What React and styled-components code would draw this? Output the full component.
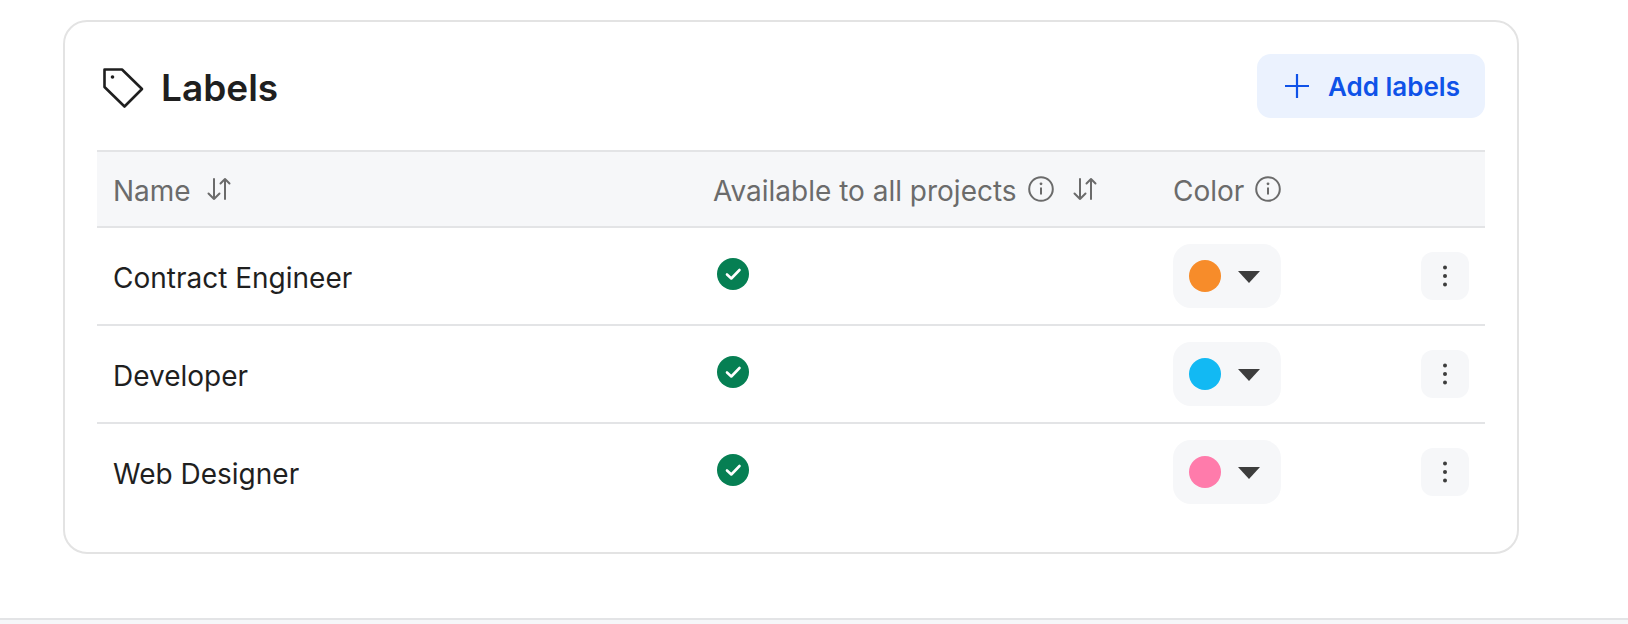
import React from 'react';
import styled, { createGlobalStyle } from 'styled-components';

const GlobalStyle = createGlobalStyle`
    html, body {
        margin: 0;
        padding: 0;
        background: #fff;
    }
    body {
        font-family: "Inter", "Liberation Sans", sans-serif;
        color: #1f1f1f;
    }
`;

const labels = [
    { name: 'Contract Engineer', color: '#f78c2a' },
    { name: 'Developer', color: '#12b9f3' },
    { name: 'Web Designer', color: '#ff7bab' },
];

function TagIcon() {
    return (
        <TagSvg width="42" height="42" viewBox="0 0 42 42" fill="none" stroke="#1f1f1f" strokeWidth="2.6" strokeLinejoin="round">
            <path d="M2.5 2.500h17.500l20 19.500-17.500 17.500L2.500 20z" />
            <circle cx="10.500" cy="10" r="1.800" fill="#1f1f1f" stroke="none" />
        </TagSvg>
    );
}

function SortIcon() {
    return (
        <svg width="24" height="24" viewBox="0 0 24 24" fill="none" stroke="#6b6b6b" strokeWidth="2" strokeLinecap="round" strokeLinejoin="round">
            <path d="M7 2v20M1.500 16.500 7 22l5.500-5.500" />
            <path d="M18 22V2M13.500 6.500 18 2l4.500 4.500" />
        </svg>
    );
}

function InfoIcon() {
    return (
        <svg width="26" height="26" viewBox="0 0 26 26" fill="none" stroke="#6b6b6b" strokeWidth="2">
            <circle cx="13" cy="13" r="11.800" />
            <path d="M13 11.500v7" />
            <circle cx="13" cy="7.800" r="1.400" fill="#6b6b6b" stroke="none" />
        </svg>
    );
}

function PlusIcon() {
    return (
        <svg width="24" height="24" viewBox="0 0 24 24" fill="none" stroke="#0f52e8" strokeWidth="2.200">
            <path d="M12 0v24M0 12h24" />
        </svg>
    );
}

function CheckIcon() {
    return (
        <svg width="32" height="32" viewBox="0 0 32 32">
            <circle cx="16" cy="16" r="16" fill="#067f53" />
            <path d="M10 16.500l4.300 4L22.500 12" fill="none" stroke="#fff" strokeWidth="2.600" strokeLinecap="round" strokeLinejoin="round" />
        </svg>
    );
}

function KebabIcon() {
    return (
        <svg width="6" height="24" viewBox="0 0 6 24" fill="#3d3d3d">
            <circle cx="3" cy="3.500" r="2" />
            <circle cx="3" cy="12" r="2" />
            <circle cx="3" cy="20.500" r="2" />
        </svg>
    );
}

function App() {
    return (
        <Page>
            <GlobalStyle />
            <Card>
                <CardHeader>
                    <Title>
                        <TagIcon />
                        <h2>Labels</h2>
                    </Title>
                    <AddButton>
                        <PlusIcon />
                        Add labels
                    </AddButton>
                </CardHeader>
                <HeadRow>
                    <HeadCell>
                        Name
                        <SortSlot><SortIcon /></SortSlot>
                    </HeadCell>
                    <HeadCell>
                        Available to all projects
                        <InfoSlot><InfoIcon /></InfoSlot>
                        <SortSlot><SortIcon /></SortSlot>
                    </HeadCell>
                    <HeadCell>
                        Color
                        <InfoSlot><InfoIcon /></InfoSlot>
                    </HeadCell>
                </HeadRow>
                {labels.map((label) => (
                    <Row key={label.name}>
                        <NameCell>{label.name}</NameCell>
                        <CheckCell><CheckIcon /></CheckCell>
                        <ColorCell>
                            <ColorPicker>
                                <Swatch $color={label.color} />
                                <Caret />
                            </ColorPicker>
                            <MoreButton><KebabIcon /></MoreButton>
                        </ColorCell>
                    </Row>
                ))}
            </Card>
            <Footer />
        </Page>
    );
}

const Page = styled.div`
    width: 1628px;
    height: 624px;
    padding: 20px 0 0 63px;
    box-sizing: border-box;
    overflow: hidden;
`;

const Card = styled.section`
    width: 1456px;
    height: 534px;
    box-sizing: border-box;
    padding: 32px;
    border: 2px solid #e3e3e3;
    border-radius: 24px;
    background: #fff;
`;

const CardHeader = styled.div`
    display: flex;
    align-items: center;
    justify-content: space-between;
    height: 64px;
    margin-bottom: 32px;
`;

const Title = styled.div`
    display: flex;
    align-items: center;
    gap: 17px;
    padding-left: 5px;
    margin-top: 2px;

    h2 {
        margin: 2px 0 0;
        font-size: 37px;
        font-weight: 600;
        line-height: 44px;
        color: #1f1f1f;
    }
`;

const TagSvg = styled.svg`
    margin-top: 2px;
`;

const AddButton = styled.button`
    display: flex;
    align-items: center;
    gap: 19px;
    width: 228px;
    height: 64px;
    padding: 0 0 0 28px;
    border: none;
    border-radius: 14px;
    background: #ebf2fe;
    color: #0f52e8;
    font-family: inherit;
    font-size: 26px;
    font-weight: 600;
    white-space: nowrap;
`;

const columns = `600px 460px 1fr`;

const HeadRow = styled.div`
    display: grid;
    grid-template-columns: ${columns};
    height: 78px;
    box-sizing: border-box;
    border-top: 2px solid #e3e4e6;
    border-bottom: 2px solid #e3e4e6;
    background: #f6f7f9;
`;

const HeadCell = styled.div`
    display: flex;
    align-items: center;
    padding: 3px 0 0 16px;
    font-size: 28px;
    color: #6b6b6b;
    white-space: nowrap;
`;

const SortSlot = styled.span`
    display: flex;
    margin-left: 16px;
    margin-top: -3px;
`;

const InfoSlot = styled.span`
    display: flex;
    margin-left: 11px;
    margin-top: -3px;

    & + ${SortSlot} {
        margin-left: 19px;
    }
`;

const Row = styled.div`
    display: grid;
    grid-template-columns: ${columns};
    height: 98px;
    box-sizing: border-box;
    border-bottom: 2px solid #e3e4e6;

    &:last-child {
        border-bottom: none;
        height: 96px;
    }
`;

const NameCell = styled.div`
    display: flex;
    align-items: center;
    padding: 4px 0 0 16px;
    font-size: 28px;
    color: #1f1f1f;
`;

const CheckCell = styled.div`
    display: flex;
    align-items: center;
    padding: 0 0 4px 20px;
`;

const ColorCell = styled.div`
    display: flex;
    align-items: center;
    justify-content: space-between;
    padding: 0 16px;
`;

const ColorPicker = styled.div`
    display: flex;
    align-items: center;
    gap: 17px;
    width: 108px;
    height: 64px;
    padding-left: 16px;
    box-sizing: border-box;
    border-radius: 18px;
    background: #f6f7f9;
`;

const Swatch = styled.span`
    width: 32px;
    height: 32px;
    border-radius: 50%;
    background: ${(props) => props.$color};
`;

const Caret = styled.span`
    width: 0;
    height: 0;
    margin-top: 2px;
    border-left: 11px solid transparent;
    border-right: 11px solid transparent;
    border-top: 12px solid #3d3d3d;
`;

const MoreButton = styled.div`
    display: flex;
    align-items: center;
    justify-content: center;
    width: 48px;
    height: 48px;
    border-radius: 12px;
    background: #f6f7f9;
`;

const Footer = styled.div`
    height: 6px;
    margin: 64px 0 0 -63px;
    box-sizing: border-box;
    border-top: 2px solid #e3e4e6;
    background: #f6f7f9;
`;

export default App;
